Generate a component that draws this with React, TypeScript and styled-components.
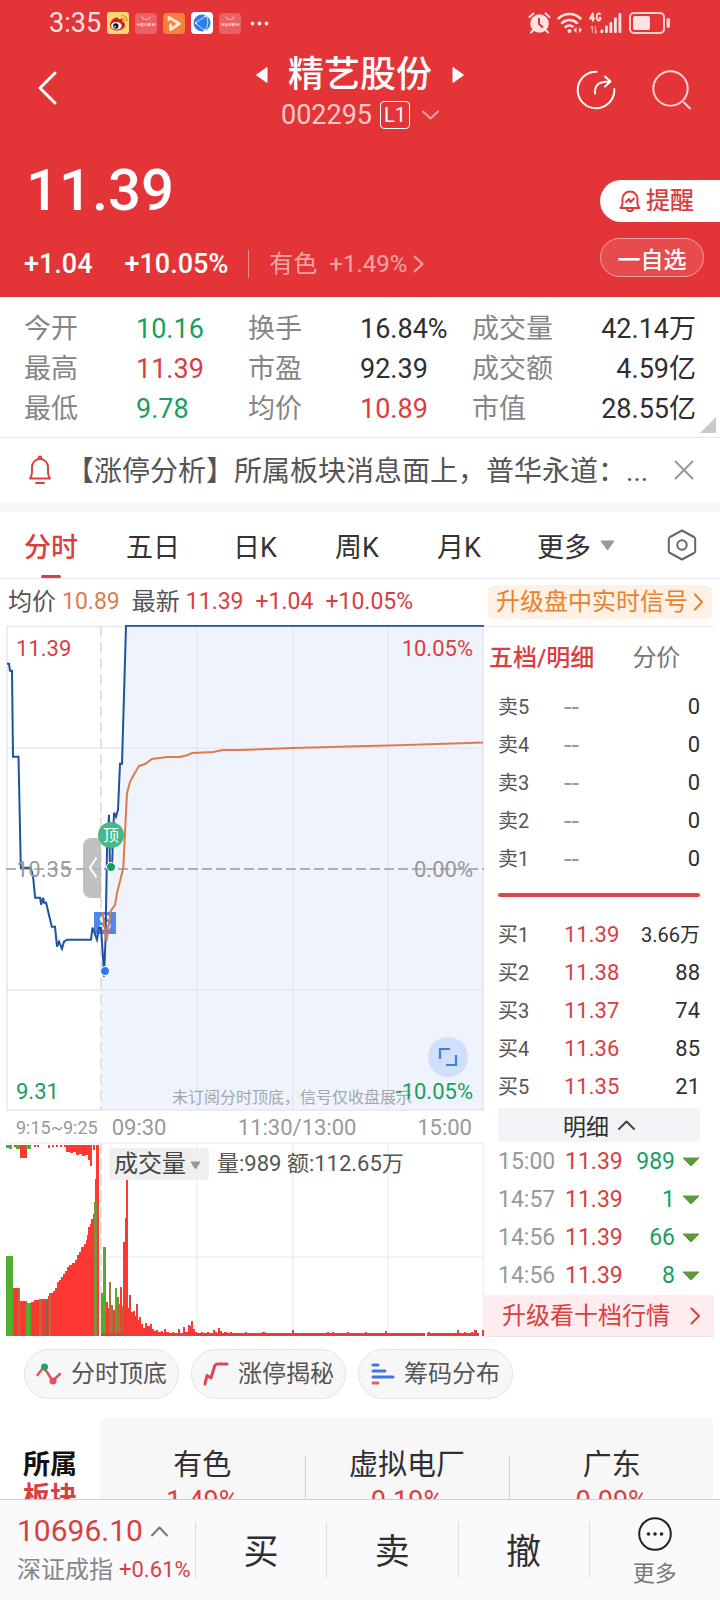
import React from "react";
import styled, { createGlobalStyle } from "styled-components";

const c = {
  brand: "#e33537",
  red: "#d8403f",
  green: "#17a05e",
  ink: "#2f2f2f",
  text: "#555555",
  mute: "#868686",
  faint: "#999999",
  line: "#e9e9eb",
  orange: "#e8812f",
};

const Global = createGlobalStyle`
  *, *::before, *::after { box-sizing: border-box; }
  body { margin: 0; background: #fff; }
  button, select { font: inherit; color: inherit; background: none; border: 0; padding: 0; margin: 0; cursor: pointer; }
  a { color: inherit; text-decoration: none; }
  svg { display: block; flex: none; }
`;

const Screen = styled.div`
  height: 100vh;
  display: flex;
  flex-direction: column;
  font-family: Roboto, "Noto Sans CJK SC", sans-serif;
  color: ${c.ink};
  background: #fff;
`;

const Scroll = styled.main`
  flex: 1;
  min-height: 0;
  overflow-y: auto;
  scrollbar-width: none;
`;

/* ---------- header ---------- */

const Header = styled.header`
  background: ${c.brand};
  color: #fff;
`;

const StatusBar = styled.div`
  display: flex;
  align-items: center;
  justify-content: space-between;
  height: 46px;
  padding: 0 49px;
  color: #fde3e3;
`;

const StatusGroup = styled.div`
  display: flex;
  align-items: center;
  gap: 6px;
`;

const Clock = styled.span`
  font-size: 27px;
  line-height: 32px;
`;

const TitleBar = styled.div`
  display: grid;
  grid-template-columns: 1fr auto 1fr;
  align-items: center;
  height: 88px;
  padding: 0 28px;
`;

const BackButton = styled.button`
  padding-left: 9px;
`;

const TitleActions = styled.div`
  display: flex;
  justify-content: flex-end;
  gap: 36px;
`;

const TitleBlock = styled.div`
  display: flex;
  flex-direction: column;
  align-items: center;
  gap: 4px;
  padding-top: 6px;
`;

const NameRow = styled.div`
  display: flex;
  align-items: center;
  gap: 20px;
`;

const StockName = styled.h1`
  margin: 0;
  font-size: 36px;
  line-height: 40px;
  font-weight: 500;
`;

const CodeRow = styled.div`
  display: flex;
  align-items: center;
  gap: 8px;
  font-size: 27px;
  line-height: 32px;
  color: #fbc9ca;
`;

const LevelTag = styled.span`
  width: 30px;
  height: 28px;
  border: 1px solid #fff;
  border-radius: 4px;
  color: #fff;
  font-size: 20px;
  line-height: 26px;
  text-align: center;
`;

const CodeToggle = styled.button`
  padding-left: 4px;
`;

const PriceArea = styled.div`
  display: flex;
  justify-content: space-between;
  padding: 24px 0 17px 24px;
`;

const Price = styled.div`
  font-size: 58px;
  line-height: 64px;
  font-weight: 500;
  padding-left: 2px;
  margin-bottom: 26px;
`;

const ChangeRow = styled.div`
  display: flex;
  align-items: center;
  font-size: 27px;
  line-height: 32px;
  font-weight: 500;
`;

const Change = styled.span`
  margin-right: 32px;
`;

const Percent = styled.span`
  margin-right: 20px;
`;

const SectorLink = styled.a`
  display: flex;
  align-items: center;
  gap: 12px;
  padding-left: 20px;
  border-left: 1px solid #f08a8b;
  font-size: 24px;
  line-height: 28px;
  font-weight: 400;
  color: #f6a5a6;
`;

const SectorChange = styled.span`
  display: flex;
  align-items: center;
  gap: 6px;
`;

const PriceActions = styled.div`
  display: flex;
  flex-direction: column;
  gap: 16px;
  width: 120px;
  padding-top: 22px;
`;

const RemindButton = styled.button`
  display: flex;
  align-items: center;
  gap: 5px;
  height: 42px;
  padding-left: 19px;
  border-radius: 21px 0 0 21px;
  background: #fff;
  color: ${c.red};
  font-size: 24px;
  line-height: 30px;
  font-weight: 500;
`;

const WatchButton = styled.button`
  width: 104px;
  height: 39px;
  border: 1px solid #f3a3a4;
  border-radius: 20px;
  background: #e84b4d;
  font-size: 23px;
  font-weight: 500;
`;

/* ---------- quote figures ---------- */

const Stats = styled.dl`
  position: relative;
  display: grid;
  grid-template-columns: repeat(3, 1fr);
  margin: 0;
  padding: 12px 24px 8px;
  border-bottom: 1px solid ${c.line};
`;

const Stat = styled.div<{ $end?: boolean }>`
  display: flex;
  line-height: 40px;
  justify-content: ${(p) => (p.$end ? "space-between" : "flex-start")};
`;

const StatName = styled.dt<{ $end?: boolean }>`
  width: ${(p) => (p.$end ? "auto" : "50%")};
  font-size: 27px;
  color: ${c.mute};
`;

const StatValue = styled.dd<{ $tone?: string }>`
  margin: 0;
  font-size: 27px;
  white-space: nowrap;
  color: ${(p) => p.$tone || c.ink};
`;

const Corner = styled.svg`
  position: absolute;
  right: 4px;
  bottom: 4px;
`;

const Notice = styled.section`
  display: flex;
  align-items: center;
  height: 64px;
  padding: 0 26px 0 28px;
`;

const NoticeText = styled.a`
  flex: 1;
  min-width: 0;
  padding: 4px 0 0 14px;
  font-size: 28px;
  line-height: 40px;
  white-space: nowrap;
  overflow: hidden;
  color: ${c.text};
`;

const Band = styled.div`
  height: 10px;
  background: #f7f7f7;
`;

/* ---------- period tabs ---------- */

const Tabs = styled.nav`
  display: flex;
  align-items: center;
  height: 67px;
  padding-right: 23px;
  border-bottom: 1px solid ${c.line};
`;

const Tab = styled.button<{ $on?: boolean }>`
  position: relative;
  flex: 0 0 102px;
  height: 66px;
  font-size: 27px;
  font-weight: ${(p) => (p.$on ? 500 : 400)};
  color: ${(p) => (p.$on ? c.red : "#333")};
  &::after {
    content: "";
    display: ${(p) => (p.$on ? "block" : "none")};
    position: absolute;
    bottom: 0;
    left: 50%;
    width: 20px;
    height: 3px;
    margin-left: -10px;
    border-radius: 2px;
    background: ${c.red};
  }
`;

const MoreTab = styled(Tab)`
  flex: none;
  display: flex;
  align-items: center;
  gap: 9px;
  margin: 0 auto 0 27px;
`;

const InfoRow = styled.div`
  display: flex;
  align-items: center;
  height: 46px;
  padding: 0 8px;
  font-size: 24px;
  line-height: 32px;
  color: ${c.text};
`;

const InfoPair = styled.span<{ $tone: string }>`
  display: flex;
  align-items: center;
  gap: 6px;
  margin-right: 12px;
  b {
    font-size: 23px;
    font-weight: 400;
    color: ${(p) => p.$tone};
  }
`;

const SignalButton = styled.button`
  display: flex;
  align-items: center;
  justify-content: space-between;
  width: 224px;
  height: 34px;
  margin-left: auto;
  padding: 0 9px 0 8px;
  border-radius: 5px;
  background: #fff1e6;
  color: ${c.orange};
  white-space: nowrap;
`;

/* ---------- chart ---------- */

const Board = styled.div`
  display: grid;
  grid-template-columns: minmax(0, 1fr) 236px;
`;

const ChartBox = styled.div`
  position: relative;
  svg.plot {
    width: 100%;
    height: auto;
  }
`;

const ChartLabel = styled.span<{ $tone: string; $v: "top" | "mid" | "bottom"; $right?: boolean }>`
  position: absolute;
  ${(p) => (p.$right ? "right: 11px;" : "left: 16px;")}
  ${(p) => (p.$v === "top" ? "top: 11px;" : p.$v === "mid" ? "top: calc(50% - 11px);" : "bottom: 6px;")}
  font-size: 22px;
  line-height: 26px;
  color: ${(p) => p.$tone};
`;

const ChartHint = styled.span`
  position: absolute;
  right: 72px;
  bottom: 2px;
  font-size: 16px;
  line-height: 22px;
  color: #a5a7ac;
  white-space: nowrap;
`;

const ExpandButton = styled.button`
  position: absolute;
  right: 16px;
  bottom: 34px;
  width: 40px;
  height: 40px;
  display: grid;
  place-items: center;
  border-radius: 50%;
  background: #d0dffb;
`;

const Axis = styled.div`
  display: flex;
  align-items: center;
  justify-content: space-between;
  height: 31px;
  padding: 2px 12px 0 16px;
  font-size: 22px;
  color: ${c.faint};
`;

const AxisPre = styled.span`
  font-size: 18px;
`;

const AxisMain = styled.div`
  display: grid;
  grid-template-columns: 35% 1fr auto;
  flex: 1;
  margin-left: 14px;
`;

const VolumeHead = styled.div`
  position: absolute;
  top: 5px;
  left: 109px;
  display: flex;
  align-items: center;
  gap: 8px;
  font-size: 22px;
  line-height: 34px;
  color: ${c.text};
  white-space: nowrap;
`;

const SelectWrap = styled.label`
  position: relative;
  display: block;
  width: 100px;
  height: 32px;
  border-radius: 4px;
  background: #efeff0;
  svg {
    position: absolute;
    right: 8px;
    top: 13px;
    pointer-events: none;
  }
`;

const Indicator = styled.select`
  appearance: none;
  width: 100%;
  height: 32px;
  padding-left: 5px;
  font-size: 24px;
  line-height: 32px;
  color: #444;
`;

/* ---------- order book ---------- */

const Side = styled.aside`
  margin-right: 6px;
  border-top: 1px solid ${c.line};
  margin-top: 1px;
`;

const SideTabs = styled.div`
  display: flex;
  align-items: center;
  gap: 38px;
  height: 61px;
  padding: 0 0 4px 5px;
  font-size: 24px;
`;

const SideTab = styled.button<{ $on?: boolean }>`
  font-weight: ${(p) => (p.$on ? 500 : 400)};
  color: ${(p) => (p.$on ? c.red : "#777")};
`;

const SideBody = styled.div`
  margin: 0 14px;
`;

const Book = styled.table`
  width: 100%;
  border-collapse: collapse;
  table-layout: fixed;
  th, td {
    height: 38px;
    padding: 0;
    line-height: 26px;
    font-weight: 400;
    text-align: left;
    white-space: nowrap;
  }
`;

const Level = styled.th`
  width: 66px;
  font-size: 20px;
  color: ${c.text};
`;

const LevelPrice = styled.td<{ $empty?: boolean }>`
  width: 64px;
  font-size: ${(p) => (p.$empty ? "27px" : "22px")};
  color: ${(p) => (p.$empty ? c.faint : c.red)};
`;

const LevelQty = styled.td<{ $long?: boolean }>`
  font-size: ${(p) => (p.$long ? "20px" : "22px")};
  color: ${c.ink};
  && { text-align: right; }
`;

const Ratio = styled.div`
  height: 4px;
  margin: 15px 0 19px;
  border-radius: 2px;
  background: #d8484d;
`;

const DetailToggle = styled.button`
  display: flex;
  align-items: center;
  justify-content: center;
  gap: 9px;
  width: 100%;
  height: 34px;
  margin: 2px 0 1px;
  background: #f3f4f8;
  font-size: 23px;
`;

const TradeTime = styled.td`
  width: 67px;
  font-size: 23px;
  color: ${c.faint};
`;

const TradePrice = styled.td`
  width: 60px;
  font-size: 23px;
  color: ${c.red};
`;

const TradeQty = styled.td`
  font-size: 23px;
  color: ${c.green};
  div {
    display: flex;
    align-items: center;
    justify-content: flex-end;
    gap: 7px;
  }
`;

const UpgradeButton = styled.button`
  display: flex;
  align-items: center;
  justify-content: space-between;
  width: 100%;
  height: 42px;
  padding: 0 14px 0 18px;
  border-bottom: 1px solid #f0e4e5;
  background: #feecee;
  color: ${c.red};
  font-size: 24px;
  line-height: 30px;
`;

/* ---------- chips and sectors ---------- */

const Chips = styled.div`
  display: flex;
  gap: 12px;
  padding: 12px 24px 18px;
`;

const Chip = styled.button`
  display: flex;
  align-items: center;
  justify-content: center;
  gap: 9px;
  width: 155px;
  height: 50px;
  border: 1px solid #e3e3e4;
  border-radius: 25px;
  background: #f7f7f8;
  color: ${c.text};
  font-size: 24px;
  line-height: 30px;
  white-space: nowrap;
`;

const Sectors = styled.section`
  display: flex;
  padding-right: 6px;
`;

const SectorsTitle = styled.h2`
  width: 100px;
  margin: 0;
  padding: 32px 0 0 23px;
  font-size: 27px;
  line-height: 32px;
  font-weight: 700;
  color: #111;
  span {
    display: block;
    color: ${c.red};
  }
`;

const SectorCard = styled.div`
  flex: 1;
  display: flex;
  padding: 28px 0 24px;
  border-radius: 8px;
  background: #f7f7f8;
`;

const SectorItem = styled.a`
  position: relative;
  flex: 1;
  font-size: 29px;
  line-height: 40px;
  text-align: center;
  & + &::before {
    content: "";
    position: absolute;
    left: 0;
    top: 10px;
    bottom: 0;
    width: 1px;
    background: #cfcfd1;
  }
  span {
    display: block;
    font-size: 27px;
    line-height: 32px;
    color: ${c.red};
  }
`;

/* ---------- bottom bar ---------- */

const Bottom = styled.footer`
  display: flex;
  align-items: center;
  height: 101px;
  border-top: 1px solid #cfcfd2;
  background: #fafafc;
`;

const IndexBox = styled.button`
  width: 195px;
  padding-left: 17px;
  text-align: left;
  white-space: nowrap;
`;

const IndexValue = styled.div`
  display: flex;
  align-items: center;
  gap: 8px;
  font-size: 30px;
  line-height: 36px;
  color: ${c.red};
`;

const IndexName = styled.div`
  display: flex;
  gap: 6px;
  margin-top: 4px;
  font-size: 24px;
  line-height: 34px;
  color: ${c.mute};
  b {
    font-size: 22px;
    font-weight: 400;
    color: ${c.red};
  }
`;

const Action = styled.button`
  flex: 1;
  height: 56px;
  padding-top: 6px;
  border-left: 1px solid #dcdce0;
  font-size: 35px;
  line-height: 50px;
`;

const MoreAction = styled(Action)`
  display: flex;
  flex-direction: column;
  align-items: center;
  justify-content: center;
  gap: 8px;
  font-size: 22px;
  line-height: 30px;
  color: #777;
`;

/* ---------- small drawings ---------- */

const Chevron = ({ d, w, h, stroke, sw = 2 }: { d: string; w: number; h: number; stroke: string; sw?: number }) => (
  <svg width={w} height={h} viewBox={`0 0 ${w} ${h}`} fill="none" stroke={stroke} strokeWidth={sw} strokeLinecap="round" strokeLinejoin="round">
    <path d={d} />
  </svg>
);

const Tri = ({ d, w, h, fill }: { d: string; w: number; h: number; fill: string }) => (
  <svg width={w} height={h} viewBox={`0 0 ${w} ${h}`}>
    <path d={d} fill={fill} stroke={fill} strokeLinejoin="round" />
  </svg>
);

const WeiboIcon = () => (
  <svg width="22" height="22" viewBox="0 0 22 22">
    <rect width="22" height="22" rx="3" fill="#fcd873" />
    <path d="M3 13c0-4 4-7.500 7-7.500 2 0 1.500 2 1.500 2s4-1.500 4 .8c0 1-.3 1.300 0 1.500 1.500.4 2.500 1.500 2.500 3 0 3-3.500 5.700-8 5.700S3 16 3 13z" fill="#cf1f22" />
    <ellipse cx="9.300" cy="13.700" rx="5.300" ry="3.800" fill="#fff" />
    <circle cx="8.800" cy="14" r="2.700" fill="#111" />
    <circle cx="8" cy="14.600" r=".9" fill="#fff" />
    <path d="M14 6a3 3 0 0 1 3.400 3.600M14 3.200a5.500 5.500 0 0 1 6 6.200" fill="none" stroke="#ee9a26" strokeWidth="1.400" />
  </svg>
);

const StoreIcon = () => (
  <svg width="22" height="22" viewBox="0 0 22 22">
    <rect y="1" width="22" height="21" rx="4" fill="#ec5f63" />
    <path d="M7 4.500c.5 4 7.500 4 8 0" fill="none" stroke="#f8b6b8" strokeWidth="1.200" />
    <path d="M2.500 11v3M2.500 12.500h2M4.800 11v3M6.500 11v3h1.500v-3M9.500 14l1-3 1 3M12.500 11l.8 3 .8-3 .8 3 .8-3M17.500 11v3M17.500 12.500h1.500M19.800 11v3" fill="none" stroke="#fbd5d6" strokeWidth=".9" />
  </svg>
);

const VideoIcon = () => (
  <svg width="22" height="22" viewBox="0 0 22 22">
    <rect y="1" width="22" height="21" rx="4" fill="#f6823a" />
    <path d="M6 7.500v-2l10.500 6.300-9 5.700v-4.500" fill="none" stroke="#ffe9d8" strokeWidth="2.800" strokeLinejoin="round" strokeLinecap="round" />
  </svg>
);

const BrowserIcon = () => (
  <svg width="22" height="22" viewBox="0 0 22 22">
    <rect width="22" height="22" rx="4" fill="#fff" />
    <circle cx="11" cy="11" r="8.500" fill="#2f7ee8" />
    <path d="M15 3.500L4.500 11l9.500 8M15 3.500c2.500 5 2.500 10-1 15.500" fill="none" stroke="#cfe3ff" strokeWidth="1" />
    <circle cx="15" cy="4" r="1.300" fill="#cfe3ff" />
    <circle cx="5" cy="11" r="1.300" fill="#cfe3ff" />
    <circle cx="14" cy="18" r="1.300" fill="#cfe3ff" />
  </svg>
);

const DotsIcon = () => (
  <svg width="26" height="22" viewBox="0 0 26 22" fill="#fde3e3">
    <circle cx="5.500" cy="11.500" r="1.900" />
    <circle cx="12.500" cy="11.500" r="1.900" />
    <circle cx="19.500" cy="11.500" r="1.900" />
  </svg>
);

const AlarmIcon = () => (
  <svg width="23" height="22" viewBox="0 0 23 22">
    <circle cx="11.500" cy="11.500" r="9.300" fill="#fde3e3" />
    <path d="M1.500 5l4-3.500M21.500 5l-4-3.500M5 18.500l-2 2M18 18.500l2 2" stroke="#fde3e3" strokeWidth="2" strokeLinecap="round" />
    <path d="M11 6v6l4 3.500" fill="none" stroke={c.brand} strokeWidth="2" />
  </svg>
);

const WifiIcon = () => (
  <svg width="26" height="22" viewBox="0 0 26 22" fill="none" stroke="#fde3e3" strokeWidth="2.500" strokeLinecap="round">
    <path d="M1.500 6.500a16 16 0 0 1 22 0M5 11a11 11 0 0 1 15 0M8.500 15a6 6 0 0 1 7-.5" />
    <circle cx="12.500" cy="19" r="2" fill="#fde3e3" stroke="none" />
    <path d="M19.500 15v6l-3-3zM22 15v6l3-3z" fill="#fde3e3" stroke="none" />
  </svg>
);

const SignalIcon = () => (
  <svg width="34" height="22" viewBox="0 0 34 22">
    <g fill="none" stroke="#fde3e3" strokeWidth="1.800">
      <path d="M4 9.500V1L1 6.500h4.800" />
      <path d="M11.500 2.800C11 .8 7.700.8 7.700 5c0 4.500 3.800 4.500 3.800 1H9.800" />
    </g>
    <path d="M3.500 14v7M1.500 16l2-2M6.500 14v7l1.500-2" fill="none" stroke="#f39a9b" strokeWidth="1.400" />
    <g fill="#fde3e3">
      <rect x="11.500" y="17.500" width="2.800" height="3.500" rx="1" />
      <rect x="16" y="13.500" width="2.800" height="7.500" rx="1" />
      <rect x="20.500" y="10" width="2.800" height="11" rx="1" />
      <rect x="25" y="5.500" width="2.800" height="15.500" rx="1" />
      <rect x="29.500" y="1" width="2.800" height="20" rx="1" />
    </g>
  </svg>
);

const BatteryIcon = () => (
  <svg width="42" height="22" viewBox="0 0 42 22">
    <rect x="1" y="1" width="34" height="20" rx="4" fill="none" stroke="#fbd0d1" strokeWidth="2" />
    <rect x="4" y="4" width="17" height="14" rx="2" fill="#fde3e3" />
    <rect x="37.500" y="6" width="3.500" height="10" rx="1.700" fill="#fbd0d1" />
  </svg>
);

const ShareIcon = () => (
  <svg width="40" height="40" viewBox="0 0 40 40" fill="none" stroke="#fff" strokeWidth="2" strokeLinecap="round" strokeLinejoin="round">
    <path d="M20.500 1.700A18.300 18.300 0 1 0 38.300 19" />
    <path d="M19 23.500c-.5-8 3-12 14.500-12M29 6.500l5.500 5-5.500 5" />
  </svg>
);

const SearchIcon = () => (
  <svg width="40" height="40" viewBox="0 0 40 40" fill="none" stroke="#fbd6d6" strokeWidth="2" strokeLinecap="round">
    <circle cx="18.500" cy="18.500" r="17.200" />
    <path d="M32 32.500l6 6" />
  </svg>
);

const RemindIcon = () => (
  <svg width="22" height="24" viewBox="0 0 22 24" fill="none" stroke={c.red} strokeWidth="2" strokeLinejoin="round" strokeLinecap="round">
    <path d="M1.500 19h19c-1.500-1.500-2-2.500-2-4v-5a7.500 7.500 0 0 0-15 0v5c0 1.500-.5 2.500-2 4z" />
    <path d="M8 20.500c1 2.300 5 2.300 6 0M7 13l3-3 1.500 3 3.500-3.500" />
  </svg>
);

const NoticeBell = () => (
  <svg width="24" height="30" viewBox="0 0 24 30" fill="none" stroke={c.red} strokeWidth="1.900" strokeLinejoin="round" strokeLinecap="round">
    <path d="M2 23.500h20c-1.500-2-2-3.500-2-6V12c0-4.500-3.300-8-8-8s-8 3.500-8 8v5.500c0 2.500-.5 4-2 6z" />
    <path d="M10.500 3c0-2 3-2 3 0M8 28h8" />
  </svg>
);

const HexIcon = () => (
  <svg width="30" height="32" viewBox="0 0 30 32" fill="none" stroke="#666" strokeWidth="2" strokeLinejoin="round">
    <path d="M15 1.500l12 6.500q1.200.7 1.200 2v12q0 1.300-1.200 2L15 30.500 3 24q-1.200-.7-1.200-2V10q0-1.300 1.200-2z" />
    <circle cx="15" cy="16" r="4.700" />
  </svg>
);

const MoreIcon = () => (
  <svg width="34" height="34" viewBox="0 0 34 34" fill="none" stroke="#222" strokeWidth="2">
    <circle cx="17" cy="17" r="15.800" />
    <g fill="#222" stroke="none">
      <circle cx="10.500" cy="17" r="1.800" />
      <circle cx="17" cy="17" r="1.800" />
      <circle cx="23.500" cy="17" r="1.800" />
    </g>
  </svg>
);

const PeakIcon = () => (
  <svg width="26" height="22" viewBox="0 0 26 22" fill="none" strokeWidth="2.400" strokeLinecap="round">
    <path d="M1.500 12L7 5l4 4 5.500 9L24 11" stroke="#e0525a" strokeLinejoin="round" />
    <circle cx="8.500" cy="4" r="3.500" fill="#1ea36a" />
    <circle cx="17" cy="18" r="3.500" fill="#e0525a" />
  </svg>
);

const LimitIcon = () => (
  <svg width="26" height="24" viewBox="0 0 26 24" fill="none" stroke="#dd4850" strokeWidth="3" strokeLinecap="round" strokeLinejoin="round">
    <path d="M2 22l2-8.500 4 2.500 3.500-11.500q.8-2.500 3-2.500h9.500" />
  </svg>
);

const ChipsIcon = () => (
  <svg width="24" height="22" viewBox="0 0 24 22" strokeWidth="3" strokeLinecap="round">
    <path d="M2 2h5M2 8h12M2 14h20" stroke="#3d76e0" />
    <path d="M2 20h5" stroke="#e0606a" />
  </svg>
);

/* ---------- data ---------- */

const stats: [string, string, string?][] = [
  ["今开", "10.16", c.green],
  ["换手", "16.84%"],
  ["成交量", "42.14万"],
  ["最高", "11.39", c.red],
  ["市盈", "92.39"],
  ["成交额", "4.59亿"],
  ["最低", "9.78", c.green],
  ["均价", "10.89", c.red],
  ["市值", "28.55亿"],
];

const asks = ["卖5", "卖4", "卖3", "卖2", "卖1"];
const bids = [
  ["买1", "11.39", "3.66万"],
  ["买2", "11.38", "88"],
  ["买3", "11.37", "74"],
  ["买4", "11.36", "85"],
  ["买5", "11.35", "21"],
];
const trades = [
  ["15:00", "11.39", "989"],
  ["14:57", "11.39", "1"],
  ["14:56", "11.39", "66"],
  ["14:56", "11.39", "8"],
];

const R = "#fd3833";
const G = "#4fae2e";
const B = "#b0703a";

// Volume bars: x, width, top
const bars: [number, number, number, string][] = [
  [12, 7, 146, R], [18, 2, 146, B], [20, 7, 159, R], [26, 6, 161, G], [31, 3, 160, R], [34, 5, 158, R],
  [39, 3, 157, B], [42, 4, 157, R], [46, 2, 157, "#7a6a58"], [48, 2, 154, R], [49, 2, 151, B],
  [6, 7, 114, G], [94, 3, 60, "#7f8f3a"],
  [101, 3, 151, G], [103, 3, 105, G], [106, 2, 160, R], [108, 2, 166, R], [109, 2, 140, B], [111, 2, 163, B],
  [113, 2, 168, R], [115, 2, 146, G], [117, 2, 155, B], [119, 2, 162, B], [120, 2, 145, R], [122, 2, 164, B],
  [123, 2, 100, R], [125, 1, 76, R], [126, 2, 38, R], [128, 2, 166, R], [129, 2, 153, "#e04038"], [131, 2, 170, R],
  [133, 2, 169, R], [135, 2, 174, R], [136, 2, 162, R], [138, 2, 178, R], [139, 2, 175, R], [141, 2, 182, R],
  [143, 2, 186, R], [145, 2, 181, R], [147, 3, 184, R], [150, 2, 182, R], [152, 2, 187, R], [154, 2, 189, R],
  [156, 2, 188, R], [158, 3, 190, R], [161, 2, 189, R], [164, 2, 187, R], [166, 3, 190, R], [172, 2, 190, R],
  [178, 2, 187, R], [180, 2, 191, R], [183, 2, 185, R], [185, 3, 190, R], [188, 2, 183, R], [190, 2, 184, R],
  [191, 2, 179, R], [193, 2, 187, R], [195, 2, 190, R], [201, 2, 190, R], [207, 2, 190, R], [213, 2, 188, R],
  [215, 2, 190, R], [218, 2, 186, R], [220, 2, 189, R], [224, 3, 190, R], [230, 2, 190, R], [245, 2, 190, R],
  [262, 3, 190, R], [292, 2, 188, R], [327, 2, 190, R], [332, 2, 190, R], [347, 2, 190, R], [365, 2, 190, R],
  [385, 2, 189, R], [428, 2, 190, R], [457, 2, 188, R], [464, 2, 190, R], [471, 2, 190, R], [474, 3, 188, R],
  [482, 2, 188, R],
];

// Unmatched auction volume, hanging from the top edge: x, width, height
const hanging: [number, number, number, string][] = [
  [6, 6, 3, G], [9, 3, 4, G], [14, 2, 2, R], [16, 4, 4, G], [20, 7, 13, R], [26, 5, 4, G], [34, 2, 2, R], [37, 2, 2, R],
  [48, 2, 3, R], [52, 2, 2, R], [56, 2, 2, R], [60, 2, 2, R], [64, 3, 2, R], [66, 4, 7, R], [70, 3, 8, R],
  [73, 3, 7, R], [76, 3, 10, R], [79, 3, 9, R], [82, 3, 11, R], [85, 3, 10, R], [88, 2, 15, R], [90, 2, 21, R],
  [93, 2, 5, R], [96, 2, 40, R], [97, 2, 191, R],
];

const PriceChart = () => (
  <svg className="plot" viewBox="0 0 484 486" fill="none">
    <path d="M101 485V303h2l1 49 1-37 2-90 2-35 1 52h2l2-54 2 4 2-7 2-46h2l4-138h358v484z" fill="#eef3fc" />
    <g stroke="#e5e8ee" strokeWidth="1.500">
      <path d="M6 1.500H484M6 123H484M6 365H484M6 485H484M7 1v484M197 1v484M293 1v484M388 1v484M483 1v484" />
    </g>
    <path d="M101 1v484" stroke="#e2e2e4" strokeWidth="2" strokeDasharray="11 5" />
    <path d="M6 244H484" stroke="#9a9b9f" strokeWidth="1.500" strokeDasharray="10 4" />
    <rect x="94" y="287" width="22" height="22" fill="#4f87ee" />
    <text x="105" y="305" fill="#fff" fontSize="20" fontWeight="700" textAnchor="middle">S</text>
    <path
      d="M7 38.700h2l1 7h2l1 86h5.500l2.300 111h10l2.300 9 2 21h5l1 7 2-7 1 5h2l5.700 24H55l2 20 2-5 3 7 2-7 3-2h24l1.500-12 4.500 12 2-12h2l2.500 37 .5 12 1.500-37 1.500-90 2-35 1 52h2l2-54 2 4 2-7 2-46h2l4-138h358"
      stroke="#1f52a0"
      strokeWidth="2"
    />
    <path
      d="M102.500 287l4 29 4.200-30 4.300-6 2-12 6.300-25 1.700-35 2-40 3-11 3-6 6-10 6-2 7-5 15-2h13l8-2 4-2 21-1 10-2h17l53-2 56-1.500 58-1.500 76-2.500"
      stroke="#dd7b4e"
      strokeWidth="2"
    />
    <path d="M101 213H92q-9 0-9 9v42q0 9 9 9h9z" fill="#b5b5b5" fillOpacity=".85" />
    <path d="M96.500 232.500L90 242.500l6.500 10" stroke="#fff" strokeWidth="2" />
    <path d="M111 225l-4-3.500h8z" fill="#35b27b" />
    <circle cx="111" cy="210" r="13" fill="#45b987" />
    <text x="111" y="216" fill="#fff" fontSize="16" textAnchor="middle">顶</text>
    <circle cx="111" cy="242" r="4.500" fill="#0f9d63" stroke="#fff" />
    <circle cx="105" cy="346" r="4.500" fill="#2f78ea" stroke="#fff" />
  </svg>
);

const VolumeChart = () => (
  <svg className="plot" viewBox="0 0 484 195" fill="none">
    <g stroke="#efeff1" strokeWidth="1.500">
      <path d="M6 1H484M101 115H484M197 1v193M293 1v193M388 1v193M483.500 1v193" />
    </g>
    <path d="M101 1v193" stroke="#f7dcdc" strokeWidth="2" strokeDasharray="11 5" />
    <path
      d="M51 194v-43h2v-2h2v-3h2v-6h2v-2h2v-3h2v-3h2v-3h2v-4h2v-2h3v-2h3v-3h2v-5h2v-3h2v-5h3v-3h2v-4h1v-5h1v-8h2v-3h1v-5h2v-5h2v-35h2V194z"
      fill={R}
    />
    {bars.map(([x, w, top, f], i) => (
      <rect key={i} x={x} y={top} width={w} height={194 - top} fill={f} />
    ))}
    {hanging.map(([x, w, h, f], i) => (
      <rect key={i} x={x} y={3} width={w} height={h} fill={f} />
    ))}
    <path d="M101 192.500H425M427 192.500h52" stroke="#e2403c" strokeWidth="3" />
  </svg>
);

const App = () => (
  <Screen>
    <Global />
    <Scroll>
      <Header>
        <StatusBar>
          <StatusGroup>
            <Clock>3:35</Clock>
            <WeiboIcon />
            <StoreIcon />
            <VideoIcon />
            <BrowserIcon />
            <StoreIcon />
            <DotsIcon />
          </StatusGroup>
          <StatusGroup>
            <AlarmIcon />
            <WifiIcon />
            <SignalIcon />
            <BatteryIcon />
          </StatusGroup>
        </StatusBar>
        <TitleBar>
          <div>
            <BackButton aria-label="返回">
              <Chevron w={20} h={34} d="M18 2L3 17l15 15" stroke="#fff" sw={3} />
            </BackButton>
          </div>
          <TitleBlock>
            <NameRow>
              <button aria-label="上一只">
                <Tri w={13} h={18} d="M12 1.500v15L1.500 9z" fill="#fff" />
              </button>
              <StockName>精艺股份</StockName>
              <button aria-label="下一只">
                <Tri w={13} h={18} d="M1 1.500v15L11.500 9z" fill="#fff" />
              </button>
            </NameRow>
            <CodeRow>
              002295
              <LevelTag>L1</LevelTag>
              <CodeToggle aria-label="展开">
                <Chevron w={17} h={10} d="M1 1.500l7.500 7 7.500-7" stroke="#f5a5a6" />
              </CodeToggle>
            </CodeRow>
          </TitleBlock>
          <TitleActions>
            <button aria-label="分享"><ShareIcon /></button>
            <button aria-label="搜索"><SearchIcon /></button>
          </TitleActions>
        </TitleBar>
        <PriceArea>
          <div>
            <Price>11.39</Price>
            <ChangeRow>
              <Change>+1.04</Change>
              <Percent>+10.05%</Percent>
              <SectorLink href="#sector">
                有色
                <SectorChange>
                  +1.49%
                  <Chevron w={11} h={18} d="M1.500 1.500L9.500 9l-8 7.500" stroke="#f6a5a6" />
                </SectorChange>
              </SectorLink>
            </ChangeRow>
          </div>
          <PriceActions>
            <RemindButton><RemindIcon />提醒</RemindButton>
            <WatchButton>一自选</WatchButton>
          </PriceActions>
        </PriceArea>
      </Header>

      <Stats>
        {stats.map(([name, value, tone], i) => (
          <Stat key={name} $end={i % 3 === 2}>
            <StatName $end={i % 3 === 2}>{name}</StatName>
            <StatValue $tone={tone}>{value}</StatValue>
          </Stat>
        ))}
        <Corner width="16" height="16" viewBox="0 0 16 16"><path d="M16 0v16H0z" fill="#c9c9c9" /></Corner>
      </Stats>

      <Notice>
        <NoticeBell />
        <NoticeText href="#notice">【涨停分析】所属板块消息面上，普华永道：...</NoticeText>
        <button aria-label="关闭">
          <Chevron w={20} h={20} d="M1.500 1.500l17 17M18.500 1.500l-17 17" stroke="#999" />
        </button>
      </Notice>
      <Band />

      <Tabs>
        <Tab $on>分时</Tab>
        <Tab>五日</Tab>
        <Tab>日K</Tab>
        <Tab>周K</Tab>
        <Tab>月K</Tab>
        <MoreTab>
          更多
          <Tri w={15} h={11} d="M1 1h13L7.500 10z" fill="#999" />
        </MoreTab>
        <button aria-label="设置"><HexIcon /></button>
      </Tabs>

      <InfoRow>
        <InfoPair $tone="#dd7b4e">均价<b>10.89</b></InfoPair>
        <InfoPair $tone={c.red}>最新<b>11.39</b></InfoPair>
        <InfoPair $tone={c.red}><b>+1.04</b></InfoPair>
        <InfoPair $tone={c.red}><b>+10.05%</b></InfoPair>
        <SignalButton>
          升级盘中实时信号
          <Chevron w={9} h={18} d="M1 1.500L8 9l-7 7.500" stroke={c.orange} />
        </SignalButton>
      </InfoRow>

      <Board>
        <div>
          <ChartBox>
            <PriceChart />
            <ChartLabel $v="top" $tone={c.red}>11.39</ChartLabel>
            <ChartLabel $v="top" $right $tone={c.red}>10.05%</ChartLabel>
            <ChartLabel $v="mid" $tone={c.faint}>10.35</ChartLabel>
            <ChartLabel $v="mid" $right $tone={c.faint}>0.00%</ChartLabel>
            <ChartLabel $v="bottom" $tone={c.green}>9.31</ChartLabel>
            <ChartHint>未订阅分时顶底，信号仅收盘展示</ChartHint>
            <ChartLabel $v="bottom" $right $tone={c.green}>-10.05%</ChartLabel>
            <ExpandButton aria-label="全屏">
              <svg width="20" height="20" viewBox="0 0 20 20" fill="none" stroke="#3f7de0" strokeWidth="2.200">
                <path d="M2 12V2h10M18 8v10H8" />
              </svg>
            </ExpandButton>
          </ChartBox>
          <Axis>
            <AxisPre>9:15~9:25</AxisPre>
            <AxisMain>
              <span>09:30</span>
              <span>11:30/13:00</span>
              <span>15:00</span>
            </AxisMain>
          </Axis>
          <ChartBox>
            <VolumeChart />
            <VolumeHead>
              <SelectWrap>
                <Indicator aria-label="指标" defaultValue="vol">
                  <option value="vol">成交量</option>
                </Indicator>
                <Tri w={11} h={9} d="M1 1h9L5.500 8z" fill="#999" />
              </SelectWrap>
              <span>量:989 额:112.65万</span>
            </VolumeHead>
          </ChartBox>
        </div>

        <Side>
          <SideTabs>
            <SideTab $on>五档/明细</SideTab>
            <SideTab>分价</SideTab>
          </SideTabs>
          <SideBody>
            <Book>
              <tbody>
                {asks.map((a) => (
                  <tr key={a}>
                    <Level scope="row">{a}</Level>
                    <LevelPrice $empty>--</LevelPrice>
                    <LevelQty>0</LevelQty>
                  </tr>
                ))}
              </tbody>
            </Book>
            <Ratio />
            <Book>
              <tbody>
                {bids.map(([n, p, q]) => (
                  <tr key={n}>
                    <Level scope="row">{n}</Level>
                    <LevelPrice>{p}</LevelPrice>
                    <LevelQty $long={q.length > 5 || q.endsWith("万")}>{q}</LevelQty>
                  </tr>
                ))}
              </tbody>
            </Book>
            <DetailToggle>
              明细
              <Chevron w={17} h={10} d="M1 9l7.500-7.500L16 9" stroke="#444" />
            </DetailToggle>
            <Book>
              <tbody>
                {trades.map(([t, p, q], i) => (
                  <tr key={i}>
                    <TradeTime>{t}</TradeTime>
                    <TradePrice>{p}</TradePrice>
                    <TradeQty>
                      <div>
                        {q}
                        <Tri w={18} h={10} d="M1 1h16L9 9z" fill="#5d9b3c" />
                      </div>
                    </TradeQty>
                  </tr>
                ))}
              </tbody>
            </Book>
          </SideBody>
          <UpgradeButton>
            升级看十档行情
            <Chevron w={10} h={18} d="M1.500 1.500L9 9l-7.500 7.500" stroke={c.red} />
          </UpgradeButton>
        </Side>
      </Board>

      <Chips>
        <Chip><PeakIcon />分时顶底</Chip>
        <Chip><LimitIcon />涨停揭秘</Chip>
        <Chip><ChipsIcon />筹码分布</Chip>
      </Chips>

      <Sectors id="sector">
        <SectorsTitle>所属<span>板块</span></SectorsTitle>
        <SectorCard>
          <SectorItem href="#s1">有色<span>1.49%</span></SectorItem>
          <SectorItem href="#s2">虚拟电厂<span>0.19%</span></SectorItem>
          <SectorItem href="#s3">广东<span>0.09%</span></SectorItem>
        </SectorCard>
      </Sectors>
    </Scroll>

    <Bottom>
      <IndexBox>
        <IndexValue>
          10696.10
          <Chevron w={17} h={11} d="M1 9.500L8.500 1.500 16 9.500" stroke="#777" />
        </IndexValue>
        <IndexName>深证成指<b>+0.61%</b></IndexName>
      </IndexBox>
      <Action>买</Action>
      <Action>卖</Action>
      <Action>撤</Action>
      <MoreAction><MoreIcon />更多</MoreAction>
    </Bottom>
  </Screen>
);

export default App;
